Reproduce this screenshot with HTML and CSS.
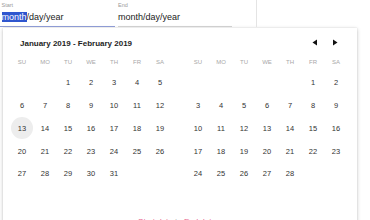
FILE: index.html
```html
<!DOCTYPE html>
<html>
<head>
<meta charset="utf-8">
<link rel="stylesheet" href="styles.css">
</head>
<body>
<div class="fields">
  <div class="field field-start">
    <div class="label">Start</div>
    <div class="input"><span class="sel">month</span>/day/year</div>
  </div>
  <div class="field field-end">
    <div class="label">End</div>
    <div class="input">month/day/year</div>
  </div>
  <div class="divider"></div>
</div>
<div class="popup">
  <div class="header">
    <div class="title">January 2019 - February 2019</div>
    <div class="nav">
      <span class="arrow"><svg width="6" height="7" viewBox="0 0 6 7"><path d="M5 0.5V6.5L0.5 3.5Z" fill="#111"/></svg></span>
      <span class="arrow"><svg width="6" height="7" viewBox="0 0 6 7"><path d="M1 0.5V6.5L5.5 3.5Z" fill="#111"/></svg></span>
    </div>
  </div>
  <div class="months">
    <div class="month">
      <div class="wd">SU</div><div class="wd">MO</div><div class="wd">TU</div><div class="wd">WE</div><div class="wd">TH</div><div class="wd">FR</div><div class="wd">SA</div>
      <div class="day"></div><div class="day"></div>
      <div class="day">1</div><div class="day">2</div><div class="day">3</div><div class="day">4</div><div class="day">5</div>
      <div class="day">6</div><div class="day">7</div><div class="day">8</div><div class="day">9</div><div class="day">10</div><div class="day">11</div><div class="day">12</div>
      <div class="day"><span class="today">13</span></div><div class="day">14</div><div class="day">15</div><div class="day">16</div><div class="day">17</div><div class="day">18</div><div class="day">19</div>
      <div class="day">20</div><div class="day">21</div><div class="day">22</div><div class="day">23</div><div class="day">24</div><div class="day">25</div><div class="day">26</div>
      <div class="day">27</div><div class="day">28</div><div class="day">29</div><div class="day">30</div><div class="day">31</div>
    </div>
    <div class="month">
      <div class="wd">SU</div><div class="wd">MO</div><div class="wd">TU</div><div class="wd">WE</div><div class="wd">TH</div><div class="wd">FR</div><div class="wd">SA</div>
      <div class="day"></div><div class="day"></div><div class="day"></div><div class="day"></div><div class="day"></div>
      <div class="day">1</div><div class="day">2</div>
      <div class="day">3</div><div class="day">4</div><div class="day">5</div><div class="day">6</div><div class="day">7</div><div class="day">8</div><div class="day">9</div>
      <div class="day">10</div><div class="day">11</div><div class="day">12</div><div class="day">13</div><div class="day">14</div><div class="day">15</div><div class="day">16</div>
      <div class="day">17</div><div class="day">18</div><div class="day">19</div><div class="day">20</div><div class="day">21</div><div class="day">22</div><div class="day">23</div>
      <div class="day">24</div><div class="day">25</div><div class="day">26</div><div class="day">27</div><div class="day">28</div>
    </div>
  </div>
  <div class="footer"><span class="pink">Start date</span> <span class="grey">to</span> <span class="pink">End date</span></div>
</div>
</body>
</html>
```
FILE: styles.css
```css
html, body {
  margin: 0;
  padding: 0;
  background: #fff;
}
body {
  width: 370px;
  height: 220px;
  overflow: hidden;
  font-family: "Liberation Sans", Arial, sans-serif;
  color: #222;
}
.fields {
  display: flex;
  height: 27px;
}
.field {
  box-sizing: border-box;
  height: 27px;
  display: flex;
  flex-direction: column;
}
.field-start {
  width: 115px;
  padding-left: 1.5px;
  border-bottom: 1px solid #8e9bd4;
}
.field-end {
  width: 114px;
  margin-left: 3px;
  border-bottom: 1px solid #cfcfcf;
}
.label {
  font-size: 5.5px;
  line-height: 6px;
  height: 6px;
  margin-top: 2px;
  color: #9a9a9a;
}
.input {
  font-size: 9px;
  line-height: 13px;
  margin-top: 3px;
  color: #222;
  white-space: nowrap;
}
.sel {
  background: #2f56cf;
  color: #fff;
}
.divider {
  width: 1px;
  height: 27px;
  margin-left: 24px;
  background: #e4e4e4;
}
.popup {
  margin-top: 1px;
  margin-left: 3px;
  width: 354px;
  height: 240px;
  background: #fff;
  box-shadow: 0 1px 4px rgba(0, 0, 0, 0.22), 0 0 1px rgba(0, 0, 0, 0.15);
}
.header {
  display: flex;
  align-items: center;
  height: 30px;
  padding-left: 17px;
}
.title {
  font-size: 8px;
  font-weight: bold;
  color: #1e1e1e;
  padding-top: 1px;
}
.nav {
  margin-left: auto;
  display: flex;
  padding-right: 12px;
}
.arrow {
  width: 20px;
  height: 12px;
  display: flex;
  align-items: center;
  justify-content: center;
  margin-top: -2px;
}
.months {
  display: flex;
  gap: 15px;
  padding-left: 7.5px;
}
.month {
  display: grid;
  grid-template-columns: repeat(7, 23px);
  grid-auto-rows: 22.75px;
}
.wd {
  height: 8px;
  line-height: 8px;
  margin-bottom: -14.75px;
  text-align: center;
  font-size: 6px;
  color: #a8a8a8;
  align-self: start;
}
.month .wd {
  grid-row: 1;
}
.month {
  grid-template-rows: 13.6px;
}
.day {
  display: flex;
  align-items: center;
  justify-content: center;
  font-size: 7.5px;
  color: #333;
}
.today {
  width: 22px;
  height: 22px;
  border-radius: 50%;
  background: #ededed;
  display: flex;
  align-items: center;
  justify-content: center;
}
.footer {
  margin-top: 31.5px;
  text-align: center;
  font-size: 8px;
  line-height: 10px;
  padding-right: 6px;
}
.pink {
  color: #e8608a;
}
.grey {
  color: #aaa;
}
```
